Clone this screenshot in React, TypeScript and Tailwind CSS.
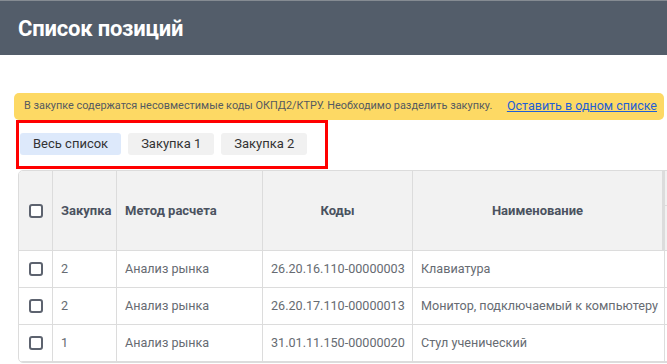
import React from "react";

const rows = [
  { lot: "2", method: "Анализ рынка", code: "26.20.16.110-00000003", name: "Клавиатура" },
  { lot: "2", method: "Анализ рынка", code: "26.20.17.110-00000013", name: "Монитор, подключаемый к компьютеру" },
  { lot: "1", method: "Анализ рынка", code: "31.01.11.150-00000020", name: "Стул ученический" },
];

const tabs = ["Весь список", "Закупка 1", "Закупка 2"];

function Checkbox() {
  return <span className="block h-[14px] w-[14px] rounded-[3px] border-2 border-[#5d636f] bg-white" />;
}

export default function App() {
  return (
    <div
      className="h-screen w-full overflow-hidden bg-white"
      style={{ fontFamily: "Roboto, 'Noto Sans', sans-serif" }}
    >
      <header className="flex h-[55px] items-center border-t border-[#858b92] bg-[#535d6a] pl-[18px]">
        <h1 className="text-[22px] font-bold tracking-[-0.2px] text-white">Список позиций</h1>
      </header>

      <div className="ml-[14px] mt-[38px] flex h-[27px] w-[650px] items-center justify-between rounded-[5px] bg-[#fdd964] pl-[10px] pr-[7px]">
        <span className="text-[10.9px] text-[#555a60]">
          В закупке содержатся несовместимые коды ОКПД2/КТРУ. Необходимо разделить закупку.
        </span>
        <a href="#" className="text-[12.5px] text-[#1f5fd6] underline">
          Оставить в одном списке
        </a>
      </div>

      <div className="ml-4 flex h-[49px] w-[312px] gap-[7px] border-[3px] border-[#ff0000] pl-[1px] pt-[10px]">
        {tabs.map((t, i) => (
          <button
            key={t}
            className={`h-[22px] rounded-[3px] px-[13px] text-[13px] text-[#333] ${i === 0 ? "bg-[#dde9fb]" : "bg-[#f1f1f1]"}`}
          >
            {t}
          </button>
        ))}
      </div>

      <div className="ml-[18px] mt-[1px] w-[900px] overflow-hidden rounded-[5px] border border-[#dcdcdc]">
        <div className="grid grid-cols-[34px_64px_146px_150px_252px_254px] text-[13px]">
          <div className="flex h-[80px] items-center justify-center border-b border-r border-[#dcdcdc] bg-[#f2f2f2]">
            <Checkbox />
          </div>
          <div className="flex h-[80px] items-center border-b border-r border-[#dcdcdc] bg-[#f2f2f2] px-2 font-bold text-[#4b5260]">
            Закупка
          </div>
          <div className="flex h-[80px] items-center border-b border-r border-[#dcdcdc] bg-[#f2f2f2] px-2 font-bold text-[#4b5260]">
            Метод расчета
          </div>
          <div className="flex h-[80px] items-center justify-center border-b border-r border-[#dcdcdc] bg-[#f2f2f2] px-2 font-bold text-[#4b5260]">
            Коды
          </div>
          <div className="flex h-[80px] items-center justify-center border-b border-r-[3px] border-[#dcdcdc] bg-[#f2f2f2] px-2 font-bold text-[#4b5260]">
            Наименование
          </div>
          <div className="flex h-[80px] flex-col border-b border-[#dcdcdc] bg-[#f2f2f2]">
            <div className="h-[35px] border-b border-[#dcdcdc]" />
            <div className="flex-1" />
          </div>

          {rows.map((r, i) => (
            <React.Fragment key={i}>
              <div className="flex h-[37px] items-center justify-center border-b border-r border-[#dcdcdc]">
                <Checkbox />
              </div>
              <div className="flex h-[37px] items-center border-b border-r border-[#dcdcdc] px-2 text-[12.6px] text-[#666b72]">
                {r.lot}
              </div>
              <div className="flex h-[37px] items-center border-b border-r border-[#dcdcdc] px-2 text-[12.6px] text-[#666b72]">
                {r.method}
              </div>
              <div className="flex h-[37px] items-center whitespace-nowrap border-b border-r border-[#dcdcdc] px-2 text-[12.6px] text-[#666b72]">
                {r.code}
              </div>
              <div className="flex h-[37px] items-center whitespace-nowrap border-b border-r border-[#dcdcdc] px-2 text-[12.6px] text-[#666b72]">
                {r.name}
              </div>
              <div className="h-[37px] border-b border-[#dcdcdc]" />
            </React.Fragment>
          ))}
        </div>
      </div>
    </div>
  );
}
